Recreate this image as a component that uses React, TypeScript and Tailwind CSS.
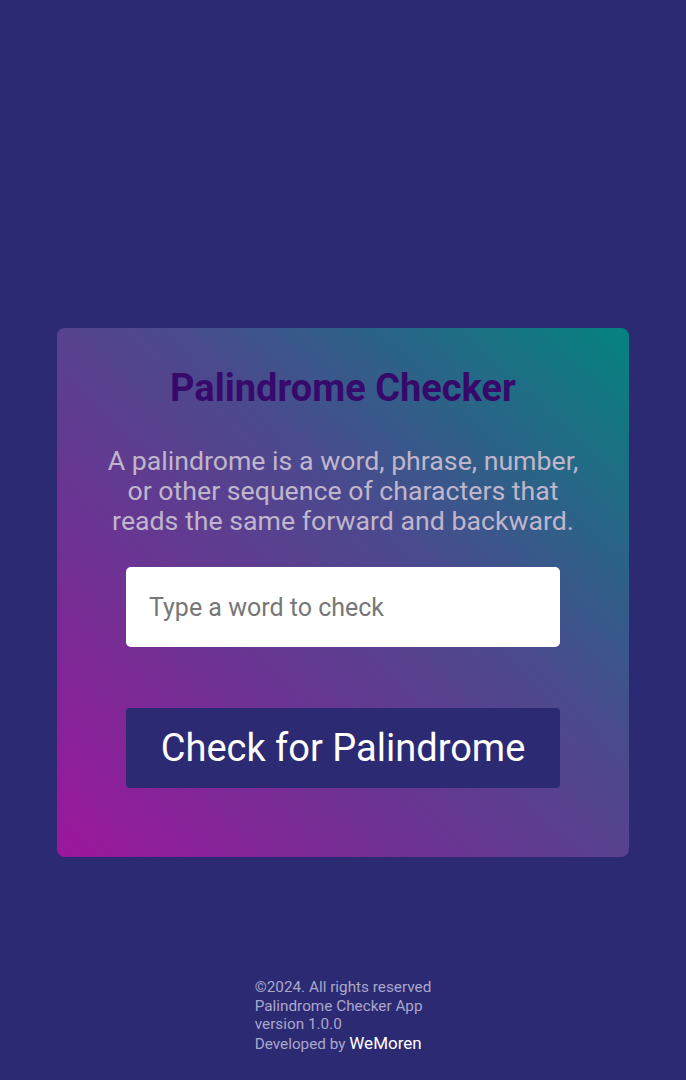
import React, { useState } from 'react';

export default function App() {
  const [word, setWord] = useState('');

  return (
    <div
      className="min-h-screen w-full bg-[#2c2a72] flex flex-col items-center"
      style={{ fontFamily: 'Roboto, "Noto Sans", sans-serif' }}
    >
      <main className="pt-[328px] w-full flex justify-center">
        <div className="w-[572px] h-[529px] rounded-lg bg-[linear-gradient(to_top_right,#9c169c_0%,#6a3592_35%,#4a4a8e_60%,#04837f_100%)] flex flex-col items-center pt-[39px]">
          <h1 className="text-[38px] leading-[42px] font-bold text-[#37096a]">Palindrome Checker</h1>
          <p className="mt-[37px] w-[486px] text-center text-[26.7px] leading-[30px] text-[#c0b6cc]">
            A palindrome is a word, phrase, number, or other sequence of characters that reads the same forward and backward.
          </p>
          <input
            value={word}
            onChange={(e) => setWord(e.target.value)}
            placeholder="Type a word to check"
            className="mt-[31px] w-[434px] h-[80px] rounded-[5px] bg-white px-[23px] text-[25px] text-[#333] placeholder:text-[#777] outline-none"
          />
          <button className="mt-[61px] w-[434px] h-[80px] rounded-[4px] bg-[#2c2a72] text-white text-[38px]">
            Check for Palindrome
          </button>
        </div>
      </main>
      <footer className="mt-[121px] text-[15.3px] leading-[18.5px] text-[#aaa7cc]">
        <p>©2024. All rights reserved</p>
        <p>Palindrome Checker App</p>
        <p>version 1.0.0</p>
        <p>
          Developed by <span className="text-white text-[17px]">WeMoren</span>
        </p>
      </footer>
    </div>
  );
}
